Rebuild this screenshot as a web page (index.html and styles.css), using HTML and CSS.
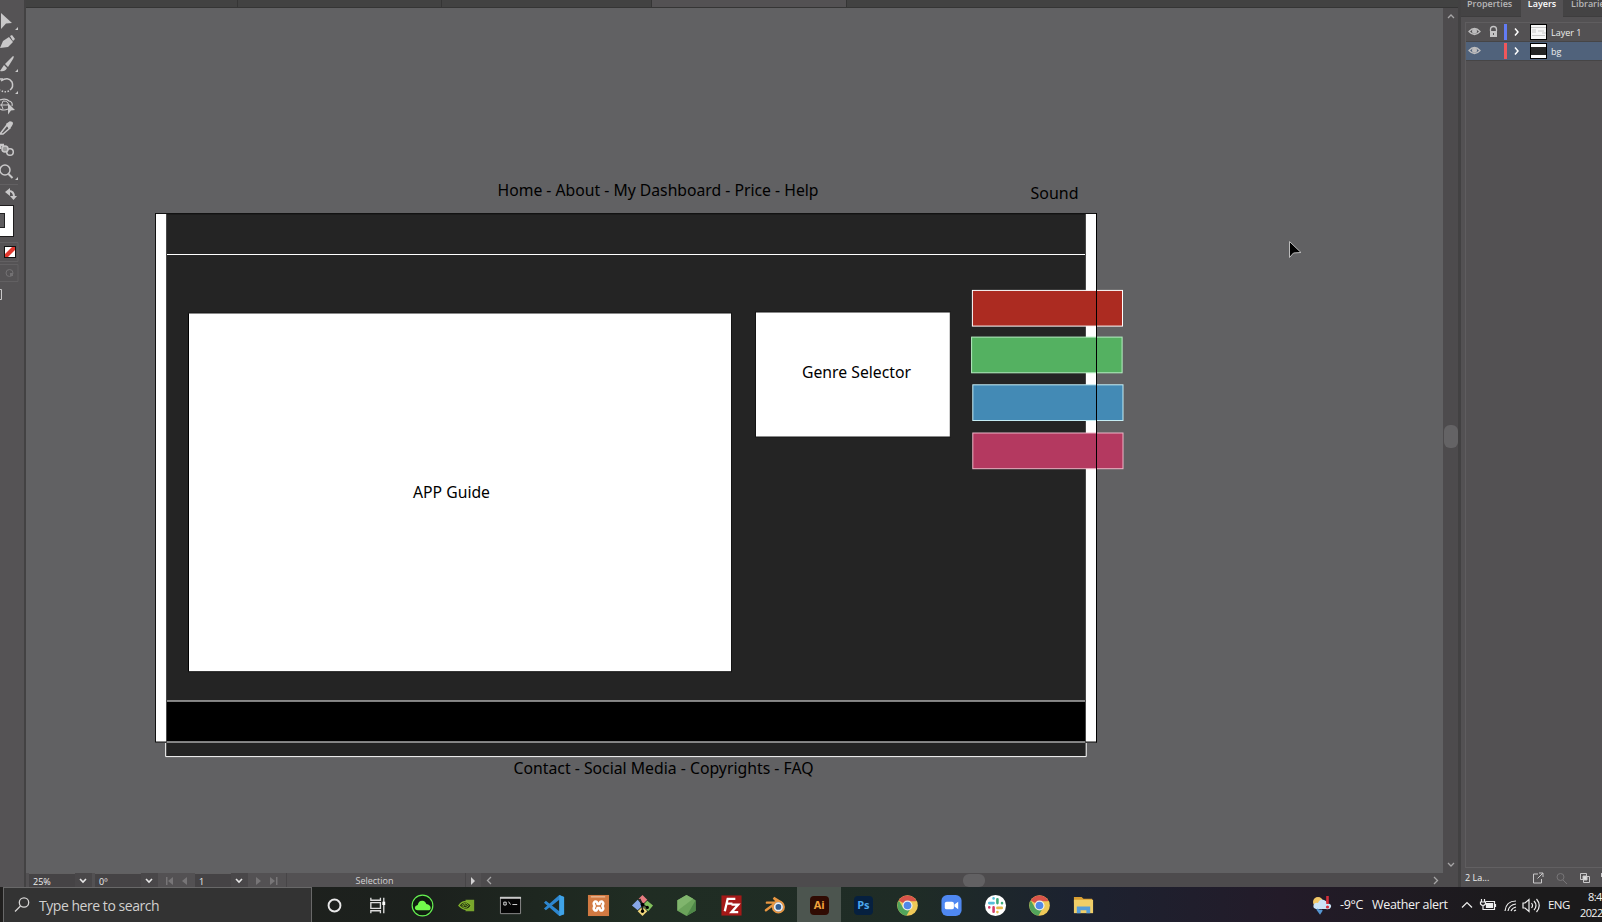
FILE: index.html
```html
<!DOCTYPE html>
<html lang="en">
<head>
<meta charset="utf-8">
<title>Illustrator wireframe</title>
<link rel="stylesheet" href="styles.css">
</head>
<body>
<div class="screen">
  <div class="app">
    <div class="tools">
      <svg class="tools-art" width="24" height="310" viewBox="0 0 24 310">
        <g fill="#c9c8c9">
          <path d="M1 13L12 23 6 23.500 1 29Z"/>
          <path d="M18 27v3h-3zM18 69v3h-3zM18 91v3h-3zM18 177v3h-3z"/>
          <path d="M0 48L3 41 9 37 13 42 8 47ZM10 36l2-1 3 4-2 2z"/>
          <path d="M13 56q1.500 0 0 3L8 67 5 64ZM4 65l3 3q-2 4-7 3z"/>
          <path d="M8 103l7 7-4 .5-3 4z"/>
        </g>
        <g fill="none" stroke="#c9c8c9" stroke-width="1.500">
          <path d="M0 79h3M1 81Q8 76 12 82q2 5-2 8"/>
          <path d="M9 91Q4 93 0 90" stroke-dasharray="1.500 1.500"/>
          <path d="M0 100q6-2 9 1 4 1 3 5M0 109q4 2 8 0M0 105h8" stroke-width="1.200"/>
          <path d="M3 101q-3 4 0 8M3 101q6 0 5 4" stroke-width="1"/>
          <path d="M0 134L7 125l3 3-7 6z"/><path d="M7 124l3-2q4 0 1 4l-2 2z" fill="#c9c8c9"/>
          <circle cx="10" cy="152" r="3.300"/><circle cx="5" cy="149" r="3" fill="#999"/><path d="M0 149v-4h4" stroke-width="2.500"/>
          <circle cx="5" cy="170" r="5"/><path d="M8.500 174l4 4" stroke-width="2"/>
          <path d="M9 191q5 0 5 6" stroke-width="2"/>
        </g>
        <path fill="#c9c8c9" d="M5 192l5-4v8zM10 196h7l-3.500 4z"/>
        <path d="M0 184.500h18M0 242.500h18v19H0M0 264.500h18v17H0" fill="none" stroke="#626062"/>
        <path d="M0 205h14v32H0z" fill="#1e1c1d"/><path d="M0 206h13v30H0z" fill="#fff"/>
        <path d="M0 213h5v15H0z" fill="#222"/><path d="M0 214h4v13H0z" fill="#5e5c5e"/>
        <path d="M4 246h12v12H4z" fill="#111"/><path d="M5 247h10v10H5z" fill="#fff"/><path d="M5 257v-3l7-7h3v3l-7 7z" fill="#e1372d"/>
        <circle cx="9.500" cy="273" r="3.500" fill="none" stroke="#737173"/><path d="M10 273h3v3h-3z" fill="#737173"/>
        <path d="M0 289.500h1.500v10H0" fill="none" stroke="#c9c8c9"/>
      </svg>
    </div>

    <div class="document">
      <div class="doc-tabs"><i class="tab-a"></i><i class="tab-b"></i><i class="tab-c"></i><i class="tab-active"></i></div>
      <div class="workspace">
        <svg class="canvas" width="1417" height="865" viewBox="26 8 1417 865">
          <rect class="page" x="155.500" y="213.500" width="941" height="528.500"/>
          <rect class="dark" x="166" y="214" width="920" height="543"/>
          <path d="M166 214H1086" stroke="#141414"/>
          <rect x="166" y="701" width="920" height="41"/>
          <path class="line" d="M166 254.500H1086"/>
          <path class="soft" d="M166 701H1086M166 742H1086"/>
          <path class="edge" d="M166.500 214V743M1085.500 214V743"/>
          <path class="line" d="M165.700 743V756.600H1086.200V743"/>
          <rect class="frame" x="188.500" y="313" width="543" height="358.700"/>
          <rect class="frame" x="755.500" y="312" width="194.800" height="125"/>
          <path d="M188.500 314V671" stroke="#000"/>
          <g class="swatches">
            <rect x="972.400" y="290.400" width="150.100" height="35.700" fill="#ac2b21" stroke="#fff"/>
            <rect x="971.600" y="337.100" width="150.500" height="35.700" fill="#54b161" stroke="#b7f0c3"/>
            <rect x="972.800" y="384.800" width="150.200" height="35.700" fill="#438ab5" stroke="#c5edf4"/>
            <rect x="972.800" y="433" width="150.200" height="35.700" fill="#b43960" stroke="#edb6c7"/>
          </g>
          <path d="M1096.500 213V742.500" stroke="#000"/>
          <g class="label">
            <text x="497.500" y="196" textLength="321" lengthAdjust="spacingAndGlyphs">Home - About - My Dashboard - Price - Help</text>
            <text x="1030.500" y="199" textLength="48" lengthAdjust="spacingAndGlyphs">Sound</text>
            <text x="413" y="498" textLength="77" lengthAdjust="spacingAndGlyphs">APP Guide</text>
            <text x="802" y="378" textLength="109" lengthAdjust="spacingAndGlyphs">Genre Selector</text>
            <text x="513.500" y="774" textLength="300" lengthAdjust="spacingAndGlyphs">Contact - Social Media - Copyrights - FAQ</text>
          </g>
          <path d="M1289.500 241.500V257.500L1293.500 253 1301 252.500Z" fill="#000" stroke="#bbb"/>
        </svg>
        <div class="vscroll">
          <svg width="14" height="10"><path class="chev" d="M4 7l3-3 3 3"/></svg>
          <i class="vthumb"></i>
          <svg width="14" height="10"><path class="chev" d="M4 3l3 3 3-3"/></svg>
        </div>
      </div>
      <div class="status">
        <span class="field zoom-field">25%</span><span class="drop"><svg width="16" height="15"><path d="M5 6l3 3 3-3"/></svg></span>
        <span class="field angle-field">0º</span><span class="drop"><svg width="16" height="15"><path d="M5 6l3 3 3-3"/></svg></span>
        <svg class="nav nav-prev" width="37" height="15"><path d="M8 4h1.500v8H8zM15 4v8l-5-4zM29 4v8l-5-4z"/></svg>
        <span class="field page-field">1</span><span class="drop"><svg width="16" height="15"><path d="M5 6l3 3 3-3"/></svg></span>
        <svg class="nav" width="38" height="15"><path d="M8 4v8l5-4zM22 4v8l5-4zM28 4h1.500v8H28z"/></svg>
        <span class="selection">Selection</span>
        <svg class="play" width="15" height="15"><path d="M5 4v8l4-4z" fill="#d2d1d2"/></svg>
        <div class="hscroll">
          <svg width="14" height="15"><path class="chev" d="M10 4L6.500 7.500 10 11"/></svg>
          <i class="hthumb"></i>
          <svg width="14" height="15"><path class="chev" d="M5 4l3.500 3.500L5 11"/></svg>
        </div>
      </div>
    </div>

    <div class="panel">
      <div class="panel-tabs"><span class="ptab props">Properties</span><span class="ptab layers">Layers</span><span class="ptab libs">Libraries</span></div>
      <div class="layer-list">
        <div class="layer">
          <svg width="56" height="18"><use href="#eye"/><path d="M24.500 8V6.500a3 3 0 016 0V8" fill="none" stroke="#c5c4c5" stroke-width="1.300"/><path d="M24 8h7v6h-7z" fill="#c5c4c5"/><path d="M27 10h1v2h-1z" fill="#555"/><path d="M38 1h3v16h-3z" fill="#627cf5"/><path class="expand" d="M49 5.500l3 3.500-3 3.500"/></svg>
          <svg class="thumb" width="17" height="16"><path d="M0 0h17v16H0z"/><path d="M1 1h15v14H1z" fill="#f6f6f6"/><path d="M1 3.500h15M2 6h4M2 8h4M8 7h6M12 9h4M2 11.500h13" stroke="#c8c8c8"/></svg>
          <span>Layer 1</span>
        </div>
        <div class="layer chosen">
          <svg width="56" height="18"><defs><g id="eye"><path d="M3 8.500q5.500-6 11 0-5.500 6-11 0z" fill="none" stroke="#bebdbe" stroke-width="1.300"/><circle cx="8.500" cy="8.300" r="2.500" fill="#bebdbe"/></g></defs><use href="#eye"/><path d="M38 1h3v16h-3z" fill="#f0575b"/><path class="expand" d="M49 5.500l3 3.500-3 3.500"/></svg>
          <svg class="thumb" width="17" height="16"><path d="M0 0h17v16H0z"/><path d="M1 1h15v14H1z" fill="#fff"/><path d="M1 4h15v8H1z" fill="#252525"/></svg>
          <span>bg</span>
        </div>
      </div>
      <div class="panel-foot">
        <span>2 La...</span>
        <svg width="72" height="16" fill="none" stroke="#c8c7c8"><path d="M8 4H3.500v9h8V9M9 3h4v4M13 3L7.500 8.500"/><g stroke="#777577"><circle cx="30.500" cy="7" r="3.500"/><path d="M33 10l4 4"/></g><path d="M50.500 3.500h6v6h-6z"/><path d="M53.500 6.500h6v6h-6z"/><path d="M53 6h4v4h-4z" fill="#ddd"/><path d="M71.500 3v4"/></svg>
      </div>
    </div>
  </div>

  <div class="taskbar">
    <div class="search"><svg width="18" height="20" fill="none" stroke="#d6d5d4" stroke-width="1.300"><circle cx="11" cy="7.500" r="4.700"/><path d="M7.500 11L2 16.500"/></svg><span>Type here to search</span></div>
    <div class="apps">
      <div class="slot"><svg viewBox="0 0 24 24"><circle cx="12" cy="12" r="6.200" fill="none" stroke="#e8e8e8" stroke-width="2"/></svg></div>
      <div class="slot"><svg viewBox="0 0 24 24"><path d="M4 4v2.500h10V4M4 20v-2.500h10V20M4 9h10v6H4zM17.500 4v16" fill="none" stroke="#ddd" stroke-width="1.400"/><path d="M16 8h3v3.500h-3z" fill="#fff"/></svg></div>
      <div class="slot"><svg viewBox="0 0 24 24"><circle cx="12" cy="12" r="10.800" fill="#101c10" stroke="#65f151" stroke-width="1.200"/><path d="M7 17q-3-.3-3-2.700 0-2.300 3-2.800 1-4.800 5-4.500 3 .2 4 3.500 4.500 1 4.500 4 0 2.500-3 2.500z" fill="#72f94b"/></svg></div>
      <div class="slot"><svg viewBox="0 0 24 24"><path d="M11 6h9v12h-9z" fill="#78a52c"/><path d="M4 12q6-8 13 0-5 8-13 0z" fill="#273713" stroke="#83b32c" stroke-width="1.200"/><path d="M7 12q4-5 7 0-3 4-6 1 2-3 4-1" fill="none" stroke="#83b32c"/></svg></div>
      <div class="slot"><svg viewBox="0 0 24 24"><path d="M1.500 3.500h21v17h-21z" fill="#050505" stroke="#8d8d8d"/><path d="M1 3h22v2H1z" fill="#c9c9c9"/><path d="M5 8.500h2.500v3H5zM10 8l2 3M14 11h5" fill="none" stroke="#ddd"/></svg></div>
      <div class="slot"><svg viewBox="0 0 24 24"><path d="M17 1l5 2v18l-5 2L1 9l2-2L17 18V6L3 17l-2-2z" fill="#2d86cf"/><path d="M17 1l5 2v18l-5 2z" fill="#3fa3e8"/></svg></div>
      <div class="slot"><svg viewBox="0 0 24 24"><path d="M1 1h22v22H1z" fill="#d27a42"/><path d="M8 8q2.500-1 3 2.500h2Q13.500 7 16 8q2 1.500 0 4.500 2 3 0 4.500-2.500 1-3-2.500h-2Q10.500 18 8 17q-2-1.500 0-4.500Q6 9.500 8 8z" fill="none" stroke="#fff" stroke-width="2.600" stroke-linejoin="round"/><path d="M4 3h15" stroke="#f2d2b8"/></svg></div>
      <div class="slot"><svg viewBox="0 0 24 24"><path d="M12 1l5 5-5 5-4-6z" fill="#e77d81"/><path d="M7 6l5 6-5 5-6-5z" fill="#87a7e8"/><path d="M17 7l6 5-5 6-6-6z" fill="#82c05d"/><path d="M12 13l5 5-5 5-5-5z" fill="#f0d77a"/><path d="M9 5l3 6v7M12 11l5 3" stroke="#222" stroke-width="1.600"/><circle cx="12" cy="11" r="2"/><circle cx="12" cy="18" r="1.700"/><circle cx="17" cy="14" r="1.700"/></svg></div>
      <div class="slot"><svg viewBox="0 0 24 24"><path d="M12 1l9.500 5.500v11L12 23l-9.500-5.500v-11z" fill="#6ba35b"/><path d="M12 1L2.500 6.500v11L19 5z" fill="#80b56d"/><path d="M21.500 6.500v11L12 23z" fill="#4f8849"/></svg></div>
      <div class="slot"><svg viewBox="0 0 24 24"><path d="M1.500 1.500h21v21h-21z" fill="#a51918"/><path d="M5 18L8 5h8M7 10h6M12 11h7l-7 8h7" fill="none" stroke="#fff" stroke-width="2.400"/></svg></div>
      <div class="slot"><svg viewBox="0 0 24 24"><path d="M3 9h10M2 17l12-9-4-4 8 5" fill="none" stroke="#e99742" stroke-width="2.500" stroke-linecap="round"/><circle cx="15" cy="13.500" r="5.800" fill="#325b91" stroke="#e99742" stroke-width="2"/><circle cx="15" cy="13.500" r="3.900" fill="#315c91" stroke="#eee" stroke-width="1.800"/></svg></div>
      <div class="slot current"><b class="tile ai">Ai</b></div>
      <div class="slot"><b class="tile ps">Ps</b></div>
      <div class="slot"><svg viewBox="0 0 24 24"><g id="chrome"><circle cx="12" cy="12" r="10.800" fill="#efc958"/><path d="M12 12L2.900 6.700A10.500 10.500 0 0121.100 6.700L20.500 7.500H12z" fill="#d9544a"/><path d="M2.900 6.700A10.500 10.500 0 0011 22.500l4.500-8L12 12 7.500 14.500z" fill="#52a45b"/><circle cx="12" cy="12" r="5.300" fill="#f1f1ee"/><circle cx="12" cy="12" r="4" fill="#5288e8"/></g></svg></div>
      <div class="slot"><svg viewBox="0 0 24 24"><rect x="1.500" y="1" width="21" height="22" rx="6" fill="#4f88f1"/><rect x="5" y="8" width="9.500" height="8" rx="2" fill="#fff"/><path d="M15 11l4-3v8l-4-3z" fill="#fff"/></svg></div>
      <div class="slot"><svg viewBox="0 0 24 24"><circle cx="12" cy="12" r="11" fill="#fff"/><g fill="none" stroke-width="2.700" stroke-linecap="round"><path d="M10 4.500v.1M5.500 9.500H10" stroke="#55bfdd"/><path d="M14 5.500V9.500M18.800 9.500v.1" stroke="#3fac7b"/><path d="M14 14.500h4.500M14 18.800v.1" stroke="#e8b849"/><path d="M10 14v4.500M5.500 14v.1" stroke="#d53d68"/></g></svg></div>
      <div class="slot"><svg viewBox="0 0 24 24"><use href="#chrome"/></svg></div>
      <div class="slot"><svg viewBox="0 0 24 24"><path d="M2 3h8l2 2h9v4H2z" fill="#d99e32"/><path d="M2 6h20v14H2z" fill="#f0ce68"/><path d="M5 20v-7h14v7h-4v-3H9v3z" fill="#559dda"/></svg></div>
    </div>
    <div class="tray">
      <svg class="weather" width="20" height="20"><circle cx="6" cy="7" r="5" fill="#f1c666"/><path d="M4 14q-4-1-2-5 2-2 4-1 2-5 6-3 3 1 3 3 5 1 4 4-1 3-5 2z" fill="#cce4f7"/><path d="M5 14l3 4 2-3" stroke="#5596d2" stroke-width="2" fill="#5596d2"/><path d="M15.500 1v8" stroke="#d52e3a" stroke-width="2.600"/><circle cx="15.500" cy="12" r="1.600" fill="#d52e3a"/></svg>
      <span class="temp">-9°C</span><span class="alert">Weather alert</span>
      <svg class="tray-icons" width="86" height="20" fill="none" stroke="#eee" stroke-width="1.200"><path d="M5 12.500l5-5 5 5"/><path d="M29.500 8.500h6v4h-6z" fill="#eee"/><path d="M28.500 6.500h9v8h-9M38.500 9v3M24.500 4v3M27.500 4v3M23.500 7h5v2q-2.500 3-5 0zM26 10v4.500h2.500"/><path d="M48 16Q49 6 59 6M51 16q1-6 8-7M54 16q1-3 5-4M57 16l2-1"/><path d="M66 8h2l4-3.500v12L68 13h-2zM74.500 8q2 2.500 0 5M77 6q4 4.500 0 9M79.500 4q5.500 6.500 0 13"/></svg>
      <span class="lang">ENG</span>
      <div class="clock"><span class="time">8:4</span><span>2022</span></div>
    </div>
  </div>
</div>
</body>
</html>
```
FILE: styles.css
```css
* { box-sizing: border-box; }
body { margin: 0; overflow: hidden; font-family: "Open Sans", "Noto Sans", sans-serif; }
svg { display: block; flex: none; }
.screen { width: 1602px; height: 922px; display: flex; flex-direction: column; overflow: hidden; }
.app { height: 887px; display: flex; background: #535153; }
.tools { width: 26px; flex: none; border-right: 2px solid #434243; background: #555355; }
.document { width: 1432px; flex: none; display: flex; flex-direction: column; }
.doc-tabs { height: 8px; flex: none; display: flex; background: #424242; border-bottom: 1px solid #353535; }
.doc-tabs i { border-right: 1px solid #353535; }
.tab-a { width: 212px; }
.tab-b { width: 204px; }
.tab-c { width: 210px; }
.doc-tabs .tab-active { width: 195px; background: #535153; }
.workspace { height: 865px; flex: none; display: flex; }
.canvas { background: #616163; }
.page { fill: #fff; stroke: #111; }
.dark { fill: #242424; }
.line { stroke: #fff; fill: none; stroke-width: 1; }
.soft { stroke: #aaa; stroke-width: 1.3; }
.edge { stroke: #484848; }
.frame { fill: #fff; stroke: #141414; stroke-width: 1; }
.label { font: 17px "Noto Sans", sans-serif; fill: #000; }
.vscroll { width: 15px; padding: 3px 0; background: #4d4b4d; display: flex; flex-direction: column; align-items: center; }
.vthumb { width: 14px; height: 23px; margin: 404px 0 auto; border-radius: 6px; background: #646365; }
.chev { fill: none; stroke: #a6a5a6; stroke-width: 1.3; }
.status { height: 14px; display: flex; padding-left: 3px; background: #535153; color: #eee; font-size: 9px; line-height: 15px; }
.field { flex: none; background: #454345; padding-left: 4px; border-top: 1px solid #616061; }
.zoom-field { width: 46px; }
.angle-field { width: 46px; }
.page-field { width: 36px; }
.drop { width: 17px; flex: none; margin-right: 3px; background: #494749; }
.angle-field + .drop { margin-right: 0; }
.page-field + .drop { margin-right: 0; }
.drop path { fill: none; stroke: #e6e6e6; stroke-width: 1.6; }
.nav { fill: #777577; }
.selection { width: 180px; flex: none; padding-right: 3px; text-align: center; border-left: 1px solid #474547; border-right: 1px solid #474547; color: #d3d2d3; }
.hscroll { flex: 1; display: flex; align-items: center; background: #4d4b4d; padding-right: 15px; }
.hthumb { width: 22px; height: 13px; border-radius: 6px; background: #626163; margin-left: 468px; margin-right: auto; }
.panel { width: 144px; flex: none; border-left: 3px solid #424142; display: flex; flex-direction: column; background: #535153; color: #eee; font-size: 9px; }
.panel-tabs { height: 17px; flex: none; display: flex; background: #444344; border-bottom: 1px solid #3e3d3e; }
.ptab { flex: none; height: 16px; line-height: 8px; color: #b7b6b7; font-weight: 600; }
.props { width: 60px; padding-left: 6px; }
.layers { width: 42px; height: 17px; text-align: center; background: #535153; color: #fff; }
.libs { padding-left: 8px; }
.layer-list { flex: 1; margin: 5px 0 0 4px; border: 1px solid #5f5d5f; border-right: 0; border-bottom-color: #626062; }
.layer { height: 19px; display: flex; align-items: center; border-bottom: 1px solid #464546; font-size: 9px; white-space: nowrap; }
.chosen { background: #50627b; }
.thumb { margin: 0 4px 0 8px; }
.expand { fill: none; stroke: #fff; stroke-width: 1.5; }
.panel-foot { height: 19px; padding-left: 4px; display: flex; align-items: center; justify-content: space-between; }
.taskbar { height: 35px; display: flex; background: linear-gradient(90deg, #201f1e 0, #1c211d 27%, #202d23 40%, #1f2c26 57%, #1c2230 67%, #231b29 80%, #1b1a1b 95%); color: #f2f2f2; }
.search { width: 309px; flex: none; margin-left: 3px; padding: 0 0 0 9px; background: #333; border: 1px solid #686868; border-bottom: 0; display: flex; align-items: center; font-size: 14px; letter-spacing: -.46px; color: #d1d0cf; white-space: nowrap; }
.search span { margin-left: 8px; }
.apps { display: flex; flex: none; }
.slot { width: 44.12px; height: 35px; padding-top: 1px; display: flex; align-items: center; justify-content: center; }
.slot svg { width: 23px; height: 23px; }
.current { background: #4c554f; }
.tile { width: 19px; height: 19px; border-radius: 4px; line-height: 18px; text-align: center; font-size: 11px; }
.ai { background: #300b03; color: #f2a33c; }
.ps { background: #06203f; color: #4ba8ef; }
.tray { flex: 1; display: flex; align-items: center; margin-left: 206px; font-size: 12.5px; white-space: nowrap; letter-spacing: -.3px; }
.temp { width: 32px; margin-left: 8px; flex: none; }
.alert { width: 85px; flex: none; }
.lang { width: 35px; padding-left: 5px; flex: none; font-size: 11.5px; letter-spacing: -.5px; }
.clock { display: flex; flex-direction: column; flex: none; margin-left: 2px; font-size: 11px; line-height: 16px; letter-spacing: -.6px; }
.time { padding-left: 8px; }
```
